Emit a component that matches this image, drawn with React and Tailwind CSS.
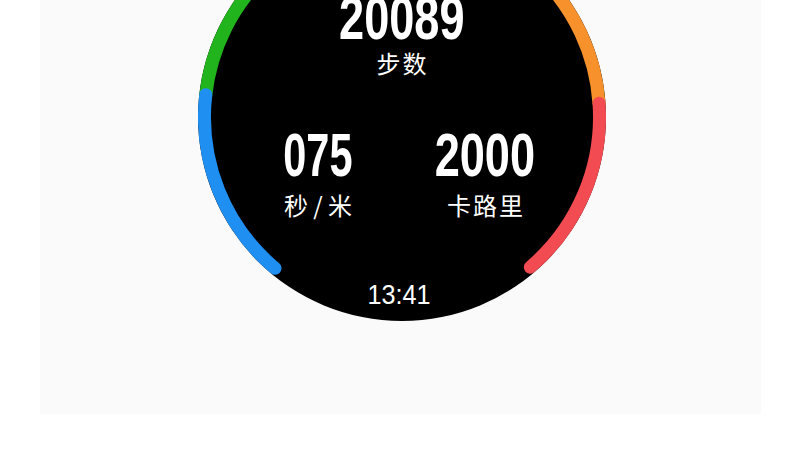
import React from "react";

const R = 197.5;
const C = 204;
function pt(deg) {
  const t = (deg * Math.PI) / 180;
  return [C + R * Math.cos(t), C + R * Math.sin(t)];
}
function arc(a, b) {
  const [x1, y1] = pt(a);
  const [x2, y2] = pt(b);
  const large = b - a > 180 ? 1 : 0;
  return `M ${x1.toFixed(2)} ${y1.toFixed(2)} A ${R} ${R} 0 ${large} 1 ${x2.toFixed(2)} ${y2.toFixed(2)}`;
}

function Ring() {
  return (
    <svg className="absolute inset-0" width="408" height="408" viewBox="0 0 408 408">
      <path d={arc(186, 272)} stroke="#22b41c" strokeWidth="13" fill="none" strokeLinecap="round" />
      <path d={arc(268, 356)} stroke="#f6912b" strokeWidth="13" fill="none" strokeLinecap="round" />
      <path d={arc(130, 186.5)} stroke="#1f8ff2" strokeWidth="13" fill="none" strokeLinecap="round" />
      <path d={arc(356, 409.5)} stroke="#f34b52" strokeWidth="13" fill="none" strokeLinecap="round" />
    </svg>
  );
}

const big = "font-['Liberation_Sans',sans-serif] font-bold text-[61px] leading-none h-[61px] text-white inline-block";
const cjk = "font-['Noto_Sans_CJK_SC','Noto_Sans',sans-serif] text-[24px] leading-none h-[24px] text-white whitespace-nowrap";

export default function App() {
  return (
    <div className="w-full h-[450px] bg-white">
      <div className="ml-[40px] w-[721px] h-[414px] bg-[#fafafa] flex justify-center items-start overflow-hidden">
        <div className="relative shrink-0 w-[408px] h-[408px] -mt-[87px] ml-[2px] rounded-full bg-black">
          <Ring />
          <div className="relative flex flex-col items-center pt-[75px]">
            <span className={big + " scale-x-[0.74]"}>20089</span>
            <span className={cjk + " mt-[2px] tracking-[2px] pl-[2px]"}>步数</span>
            <div className="flex gap-[27px] mt-[50px]">
              <div className="w-[140px] flex flex-col items-center">
                <span className={big + " scale-x-[0.68]"}>075</span>
                <span className={cjk + " mt-[7px]"}>秒 / 米</span>
              </div>
              <div className="w-[140px] flex flex-col items-center">
                <span className={big + " scale-x-[0.74]"}>2000</span>
                <span className={cjk + " mt-[7px] tracking-[2px] pl-[2px]"}>卡路里</span>
              </div>
            </div>
            <span className="mt-[64px] font-['Liberation_Sans',sans-serif] text-[28px] leading-none h-[28px] text-white inline-block scale-x-[0.9] -ml-[4px]">
              13:41
            </span>
          </div>
        </div>
      </div>
    </div>
  );
}
